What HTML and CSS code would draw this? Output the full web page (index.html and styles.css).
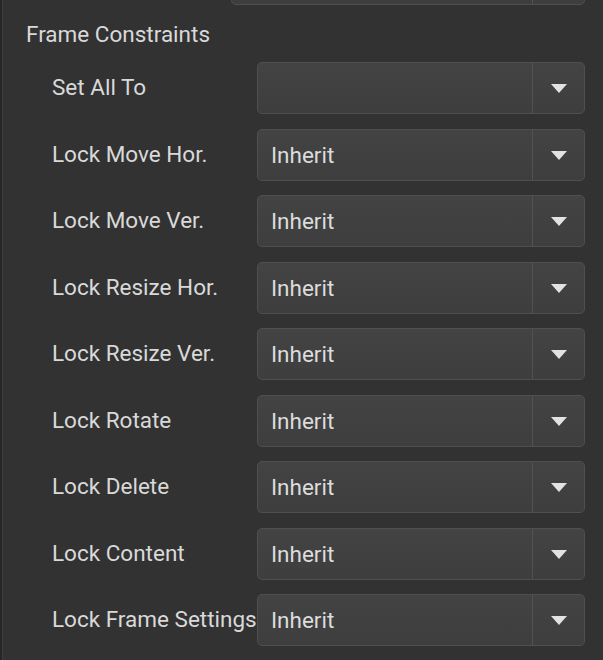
FILE: index.html
```html
<!DOCTYPE html>
<html lang="en">

<head>
  <meta charset="UTF-8">
  <meta name="viewport" content="width=device-width, initial-scale=1.0">
  <title>Frame Constraints</title>
  <link rel="stylesheet" href="styles.css">
</head>

<body>
  <div class="panel">
    <div class="select select--cut">
      <div class="select__value"></div>
      <div class="select__arrow"></div>
    </div>

    <div class="panel__title">Frame Constraints</div>

    <div class="panel__rows">
      <div class="row">
        <div class="row__label">Set All To</div>
        <div class="select">
          <div class="select__value"></div>
          <div class="select__arrow"><span class="caret"></span></div>
        </div>
      </div>
      <div class="row">
        <div class="row__label">Lock Move Hor.</div>
        <div class="select">
          <div class="select__value">Inherit</div>
          <div class="select__arrow"><span class="caret"></span></div>
        </div>
      </div>
      <div class="row">
        <div class="row__label">Lock Move Ver.</div>
        <div class="select">
          <div class="select__value">Inherit</div>
          <div class="select__arrow"><span class="caret"></span></div>
        </div>
      </div>
      <div class="row">
        <div class="row__label">Lock Resize Hor.</div>
        <div class="select">
          <div class="select__value">Inherit</div>
          <div class="select__arrow"><span class="caret"></span></div>
        </div>
      </div>
      <div class="row">
        <div class="row__label">Lock Resize Ver.</div>
        <div class="select">
          <div class="select__value">Inherit</div>
          <div class="select__arrow"><span class="caret"></span></div>
        </div>
      </div>
      <div class="row">
        <div class="row__label">Lock Rotate</div>
        <div class="select">
          <div class="select__value">Inherit</div>
          <div class="select__arrow"><span class="caret"></span></div>
        </div>
      </div>
      <div class="row">
        <div class="row__label">Lock Delete</div>
        <div class="select">
          <div class="select__value">Inherit</div>
          <div class="select__arrow"><span class="caret"></span></div>
        </div>
      </div>
      <div class="row">
        <div class="row__label">Lock Content</div>
        <div class="select">
          <div class="select__value">Inherit</div>
          <div class="select__arrow"><span class="caret"></span></div>
        </div>
      </div>
      <div class="row">
        <div class="row__label">Lock Frame Settings</div>
        <div class="select">
          <div class="select__value">Inherit</div>
          <div class="select__arrow"><span class="caret"></span></div>
        </div>
      </div>
    </div>
  </div>
</body>

</html>
```

FILE: styles.css
```css
body {
  margin: 0;
  background: #262626;
  font-family: Roboto, "Noto Sans", sans-serif;
  color: #d9d9d9;
}

.panel {
  box-sizing: border-box;
  height: 660px;
  margin-left: 2px;
  border-left: 1px solid #3d3d3d;
  background: #323232;
  overflow: hidden;
}

.select {
  box-sizing: border-box;
  display: flex;
  width: 328px;
  height: 52px;
  border: 1px solid #4f4f4f;
  border-radius: 5px;
  background: linear-gradient(#434343, #3e3e3e);
}

.select--cut {
  width: 354px;
  height: 52px;
  margin-top: -47px;
  margin-left: 228px;
}

.select__value {
  flex: 1;
  display: flex;
  align-items: center;
  padding-left: 13px;
  font-size: 22.5px;
  color: #dcdcdc;
  border-right: 1px solid #525252;
}

.select__arrow {
  width: 51px;
  display: flex;
  align-items: center;
  justify-content: center;
}

.caret {
  width: 0;
  height: 0;
  border-left: 8px solid transparent;
  border-right: 8px solid transparent;
  border-top: 9px solid #e2e2e2;
  margin-top: 1px;
}

.panel__title {
  margin: 16px 0 0 23px;
  font-size: 22.5px;
  line-height: 26px;
}

.panel__rows {
  display: flex;
  flex-direction: column;
  gap: 14.5px;
  margin-top: 15px;
  padding-left: 49px;
}

.row {
  display: flex;
  align-items: center;
}

.row__label {
  width: 205px;
  margin-top: -2px;
  font-size: 22.5px;
  white-space: nowrap;
}
```
